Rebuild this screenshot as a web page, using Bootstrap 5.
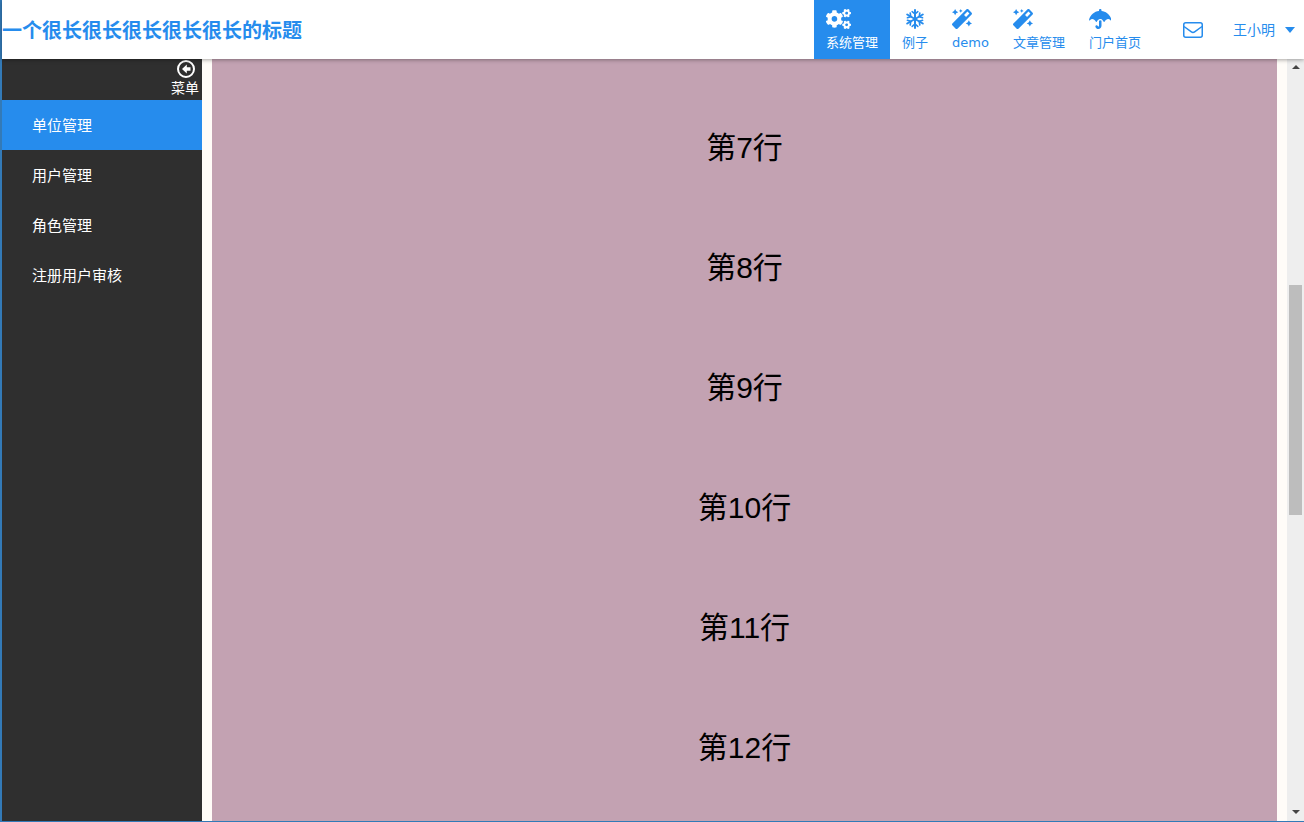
<!DOCTYPE html>
<html lang="zh">
<head>
<meta charset="utf-8">
<title>标题</title>
<link href="https://cdn.jsdelivr.net/npm/bootstrap@5.3.0/dist/css/bootstrap.min.css" rel="stylesheet">
<style>
html,body{height:100%;overflow:hidden}
body{font-family:"Liberation Sans","Noto Sans CJK SC",sans-serif;background:#fffcf8;color:#000}
.frame{height:822px;border-left:2px solid #337ab7;border-bottom:1px solid #337ab7}
.topbar{height:59px;background:#fff;box-shadow:0 1px 4px rgba(0,0,0,.35);position:relative;z-index:2}
.brand-title{font-size:20px;font-weight:700;color:#268ced;line-height:59px;font-family:"Noto Sans CJK SC",sans-serif}
.top-link{height:59px;padding:9px 12px 0;color:#268ced;font-size:13px;line-height:18px;text-decoration:none;font-family:"DejaVu Sans","Noto Sans CJK SC",sans-serif}
.top-link svg{display:block;height:20px;margin-bottom:5px;fill:currentColor}
.top-link.on{background:#268ced;color:#fff}
.mail-link{margin-left:30px;margin-right:30px;color:#268ced}
.user-link{color:#268ced;font-size:14px;font-family:"Noto Sans CJK SC",sans-serif;margin-right:9px}
.user-caret{width:0;height:0;border-left:5.5px solid transparent;border-right:5.5px solid transparent;border-top:6px solid #268ced;margin-left:10px}
.mainrow{height:762px}
.sidebar{width:200px;background:#2f2f2f;color:#fff;font-family:"Noto Sans CJK SC",sans-serif}
.fold-box{height:41px;padding:1px 3px 0 0;font-size:14px;line-height:18px}
.side-item{height:50px;line-height:50px;padding-left:30px;font-size:15px;color:#fff;text-decoration:none;display:block}
.side-item.on{background:#268ced}
.pinkpane{width:1065px;margin-left:10px;background:#c3a2b2;padding-top:29px;overflow:hidden}
.row-line{height:120px;line-height:120px;font-size:30px;text-align:center}
.railgap{width:10px}
.rail{width:17px;background:#eeeeee}
.rail-up{height:17px;padding-top:6px}
.rail-thumb{width:13px;height:230px;margin:209px auto 0;background:#bdbdbd}
.rail-spacer{height:289px}
.rail-down{height:16px;padding-top:5px}
.arrow-up{width:0;height:0;margin:0 auto;border-left:4px solid transparent;border-right:4px solid transparent;border-bottom:4px solid #444}
.arrow-down{width:0;height:0;margin:0 auto;border-left:4px solid transparent;border-right:4px solid transparent;border-top:4px solid #444}
</style>
</head>
<body>
<div class="frame d-flex flex-column">
  <nav class="topbar d-flex align-items-start">
    <div class="brand-title flex-grow-1">一个很长很长很长很长很长的标题</div>
    <div class="d-flex">
      <a class="top-link on text-center" href="#"><svg viewBox="0 0 640 512"><path d="M512.1 191l-8.2 14.3c-3 5.3-9.4 7.5-15.1 5.4-11.8-4.4-22.6-10.7-32.1-18.6-4.6-3.8-5.8-10.5-2.8-15.7l8.2-14.3c-6.9-8-12.3-17.3-15.9-27.4h-16.5c-6 0-11.2-4.3-12.2-10.3-2-12-2.1-24.6 0-37.1 1-6 6.2-10.4 12.2-10.4h16.5c3.6-10.1 9-19.4 15.9-27.4l-8.2-14.3c-3-5.2-1.9-11.9 2.8-15.7 9.5-7.9 20.4-14.2 32.1-18.6 5.7-2.1 12.1.1 15.1 5.4l8.2 14.3c10.5-1.9 21.2-1.9 31.7 0L552 6.3c3-5.3 9.4-7.5 15.1-5.4 11.8 4.4 22.6 10.7 32.1 18.6 4.6 3.8 5.8 10.5 2.8 15.7l-8.2 14.3c6.9 8 12.3 17.3 15.9 27.4h16.5c6 0 11.2 4.3 12.2 10.3 2 12 2.1 24.6 0 37.1-1 6-6.2 10.4-12.2 10.4h-16.5c-3.6 10.1-9 19.4-15.9 27.4l8.2 14.3c3 5.2 1.9 11.9-2.8 15.7-9.5 7.9-20.4 14.2-32.1 18.6-5.7 2.1-12.1-.1-15.1-5.4l-8.2-14.3c-10.4 1.9-21.2 1.9-31.7 0zm-10.5-58.8c38.5 29.6 82.4-14.3 52.8-52.8-38.5-29.7-82.4 14.3-52.8 52.8zM386.3 286.1l33.7 16.8c10.1 5.8 14.5 18.1 10.5 29.1-8.9 24.2-26.4 46.4-42.6 65.8-7.4 8.9-20.2 11.1-30.3 5.3l-29.1-16.8c-16 13.7-34.6 24.6-54.9 31.7v33.6c0 11.6-8.3 21.6-19.7 23.6-24.6 4.2-50.4 4.4-75.9 0-11.5-2-20-11.9-20-23.6V418c-20.3-7.2-38.9-18-54.9-31.7L74 403c-10 5.8-22.9 3.6-30.3-5.3-16.2-19.4-33.3-41.6-42.2-65.7-4-10.9.4-23.2 10.5-29.1l33.3-16.8c-3.9-20.9-3.9-42.4 0-63.4L12 205.8c-10.1-5.8-14.6-18.1-10.5-29 8.9-24.2 26-46.4 42.2-65.8 7.4-8.9 20.2-11.1 30.3-5.3l29.1 16.8c16-13.7 34.6-24.6 54.9-31.7V57.1c0-11.5 8.2-21.5 19.6-23.5 24.6-4.2 50.5-4.4 76-.1 11.5 2 20 11.9 20 23.6v33.6c20.3 7.2 38.9 18 54.9 31.7l29.1-16.8c10-5.8 22.9-3.6 30.3 5.3 16.2 19.4 33.2 41.6 42.1 65.8 4 10.9.1 23.2-10 29.1l-33.7 16.8c3.9 21 3.9 42.5 0 63.5zm-117.6 21.1c59.2-77-28.7-164.9-105.7-105.7-59.2 77 28.7 164.9 105.7 105.7zm243.4 182.7l-8.2 14.3c-3 5.3-9.4 7.5-15.1 5.4-11.8-4.4-22.6-10.7-32.1-18.6-4.6-3.8-5.8-10.5-2.8-15.7l8.2-14.3c-6.9-8-12.3-17.3-15.9-27.4h-16.5c-6 0-11.2-4.3-12.2-10.3-2-12-2.1-24.6 0-37.1 1-6 6.2-10.4 12.2-10.4h16.5c3.6-10.1 9-19.4 15.9-27.4l-8.2-14.3c-3-5.2-1.9-11.9 2.8-15.7 9.5-7.9 20.4-14.2 32.1-18.6 5.7-2.1 12.1.1 15.1 5.4l8.2 14.3c10.5-1.9 21.2-1.9 31.7 0l8.2-14.3c3-5.3 9.4-7.5 15.1-5.4 11.8 4.4 22.6 10.7 32.1 18.6 4.6 3.8 5.8 10.5 2.8 15.7l-8.2 14.3c6.9 8 12.3 17.3 15.9 27.4h16.5c6 0 11.2 4.3 12.2 10.3 2 12 2.1 24.6 0 37.1-1 6-6.2 10.4-12.2 10.4h-16.5c-3.6 10.1-9 19.4-15.9 27.4l8.2 14.3c3 5.2 1.9 11.9-2.8 15.7-9.5 7.9-20.4 14.2-32.1 18.6-5.7 2.1-12.1-.1-15.1-5.4l-8.2-14.3c-10.4 1.9-21.2 1.9-31.7 0zM501.6 431c38.5 29.6 82.4-14.3 52.8-52.8-38.5-29.6-82.4 14.3-52.8 52.8z"/></svg>系统管理</a>
      <a class="top-link text-center" href="#"><svg viewBox="0 0 20 20" width="20" class="mx-auto" style="fill:none"><g stroke="currentColor" stroke-width="2" stroke-linecap="round"><path d="M10 1v18M2.2 5.5l15.6 9M17.8 5.5l-15.6 9"/><path d="M7.2 2.6L10 5l2.8-2.4M7.2 17.4L10 15l2.8 2.4M2.4 8.8L5.8 7.6 5.2 4M14.8 16l-.6-3.6 3.4-1.2M2.4 11.2l3.4 1.2-.6 3.6M14.8 4l-.6 3.6 3.4 1.2" stroke-width="1.6"/></g></svg>例子</a>
      <a class="top-link text-center" href="#"><svg viewBox="0 0 512 512"><path d="M224 96l16-32 32-16-32-16-16-32-16 32-32 16 32 16 16 32zM80 160l26.66-53.33L160 80l-53.34-26.67L80 0 53.34 53.33 0 80l53.34 26.67L80 160zm352 128l-26.66 53.33L352 368l53.34 26.67L432 448l26.66-53.33L512 368l-53.34-26.67L432 288zm70.62-193.77L417.77 9.38C411.53 3.12 403.34 0 395.15 0c-8.19 0-16.38 3.12-22.63 9.38L9.38 372.52c-12.5 12.5-12.5 32.76 0 45.25l84.85 84.85c6.25 6.25 14.44 9.37 22.62 9.37 8.19 0 16.38-3.12 22.63-9.37l363.14-363.15c12.5-12.48 12.5-32.75 0-45.24zM359.45 203.46l-50.91-50.91 86.6-86.6 50.91 50.91-86.6 86.6z"/></svg>demo</a>
      <a class="top-link text-center" href="#"><svg viewBox="0 0 512 512"><path d="M224 96l16-32 32-16-32-16-16-32-16 32-32 16 32 16 16 32zM80 160l26.66-53.33L160 80l-53.34-26.67L80 0 53.34 53.33 0 80l53.34 26.67L80 160zm352 128l-26.66 53.33L352 368l53.34 26.67L432 448l26.66-53.33L512 368l-53.34-26.67L432 288zm70.62-193.77L417.77 9.38C411.53 3.12 403.34 0 395.15 0c-8.19 0-16.38 3.12-22.63 9.38L9.38 372.52c-12.5 12.5-12.5 32.76 0 45.25l84.85 84.85c6.25 6.25 14.44 9.37 22.62 9.37 8.19 0 16.38-3.12 22.63-9.37l363.14-363.15c12.5-12.48 12.5-32.75 0-45.24zM359.45 203.46l-50.91-50.91 86.6-86.6 50.91 50.91-86.6 86.6z"/></svg>文章管理</a>
      <a class="top-link text-center" href="#"><svg viewBox="0 0 576 512"><path d="M575.7 280.8C547.1 144.5 437.3 62.6 320 49.9V32c0-17.7-14.3-32-32-32s-32 14.3-32 32v17.9C138.3 62.6 29.5 144.5.3 280.8c-2.2 10.1 8.5 21.3 18.7 11.4 52-55 107.7-52.4 158.6 37 5.3 9.5 14.9 8.6 19.7 0 20.2-35.4 44.9-73.2 90-73.2 57.7 0 78.7 57.6 90 73.2 4.8 8.6 14.4 9.5 19.7 0 50.9-89.4 106.9-91.8 158.6-37 10.3 9.9 21-1.3 18.8-11.4zM256 301.7V432c0 8.8-7.2 16-16 16-7.8 0-13.2-5.3-15.1-10.7-5.9-16.7-24.1-25.4-40.8-19.5-16.7 5.9-25.4 24.2-19.5 40.8 11.2 31.9 41.6 53.3 75.4 53.3 44.1 0 80-35.9 80-80V301.6c-9.1-7.9-19.8-13.6-32-13.6-12.3 0-23 5.8-32 13.7z"/></svg>门户首页</a>
    </div>
    <a class="mail-link d-flex align-items-center" style="height:59px" href="#"><svg width="20" height="16" viewBox="0 0 20 16" fill="none" stroke="currentColor" stroke-width="1.5"><rect x=".75" y=".75" width="18.5" height="14.5" rx="2"/><path d="M1 4.5l7.4 5.4c1 .7 2.2.7 3.2 0L19 4.5"/></svg></a>
    <div class="user-link d-flex align-items-center" style="height:59px">王小明<span class="user-caret"></span></div>
  </nav>
  <div class="mainrow d-flex">
    <aside class="sidebar">
      <div class="fold-box d-flex flex-column align-items-end">
        <svg class="me-1" width="18" height="18" viewBox="0 0 18 18"><circle cx="9" cy="9" r="8" fill="none" stroke="#fff" stroke-width="2"/><path d="M9.8 4.6L5 9l4.8 4.4V10.700H13.500V7.300H9.800z" fill="#fff"/></svg>
        <span>菜单</span>
      </div>
      <a class="side-item on" href="#">单位管理</a>
      <a class="side-item" href="#">用户管理</a>
      <a class="side-item" href="#">角色管理</a>
      <a class="side-item" href="#">注册用户审核</a>
    </aside>
    <main class="pinkpane">
      <div class="row-line">第7行</div>
      <div class="row-line">第8行</div>
      <div class="row-line">第9行</div>
      <div class="row-line">第10行</div>
      <div class="row-line">第11行</div>
      <div class="row-line">第12行</div>
    </main>
    <div class="railgap"></div>
    <div class="rail d-flex flex-column">
      <div class="rail-up"><div class="arrow-up"></div></div>
      <div class="rail-thumb"></div>
      <div class="flex-grow-1"></div>
      <div class="rail-down"><div class="arrow-down"></div></div>
    </div>
  </div>
</div>
<script src="https://cdn.jsdelivr.net/npm/bootstrap@5.3.0/dist/js/bootstrap.bundle.min.js"></script>
</body>
</html>
